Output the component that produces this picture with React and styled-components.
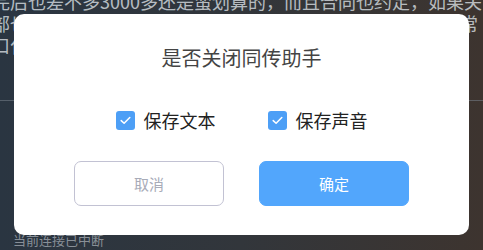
import styled, { createGlobalStyle } from 'styled-components';
import { useState } from 'react';

const GlobalStyle = createGlobalStyle`
  html, body {
    margin: 0;
    padding: 0;
  }
  body {
    font-family: "Noto Sans CJK SC", "Noto Sans", sans-serif;
  }
`;

const backgroundLines = [
  '完后也差不多3000多还是蛮划算的，而且合同也约定，如果关',
  '部也可以正常退款的，之前也有很多同学这样操作过的，非常',
  '口化的表达方式，老师上课的时候也会给大家讲解的很清楚',
];

function CheckItem({ label, checked, onToggle }) {
  return (
    <S.CheckLabel onClick={onToggle}>
      <S.Box $checked={checked}>
        {checked && (
          <svg width="11" height="9" viewBox="0 0 11 9" fill="none">
            <path d="M1.2 4.6 L4.1 7.3 L9.8 1.5" stroke="#fff" strokeWidth="1.5" strokeLinecap="round" strokeLinejoin="round" />
          </svg>
        )}
      </S.Box>
      <S.CheckText>{label}</S.CheckText>
    </S.CheckLabel>
  );
}

function App() {
  const [saveText, setSaveText] = useState(true);
  const [saveVoice, setSaveVoice] = useState(true);

  return (
    <>
      <GlobalStyle />
      <S.Page>
        <S.Backdrop>
          {backgroundLines.map((line) => (
            <S.BgLine key={line}>{line}</S.BgLine>
          ))}
          <S.Divider />
          <S.Spacer />
          <S.BgFooter>当前连接已中断</S.BgFooter>
        </S.Backdrop>

        <S.Dialog>
          <S.Title>是否关闭同传助手</S.Title>
          <S.CheckRow>
            <CheckItem label="保存文本" checked={saveText} onToggle={() => setSaveText(!saveText)} />
            <CheckItem label="保存声音" checked={saveVoice} onToggle={() => setSaveVoice(!saveVoice)} />
          </S.CheckRow>
          <S.ButtonRow>
            <S.Button>取消</S.Button>
            <S.Button $primary>确定</S.Button>
          </S.ButtonRow>
        </S.Dialog>
      </S.Page>
    </>
  );
}

export default App;

const S = {
  Page: styled.div`
    position: relative;
    width: 483px;
    height: 250px;
    overflow: hidden;
    background: linear-gradient(90deg, #2a3541 0%, #32363b 50%, #3d342f 100%);
  `,
  Backdrop: styled.div`
    display: flex;
    flex-direction: column;
    height: calc(100% + 10px);
    margin-top: -10px;
    margin-left: -8px;
  `,
  BgLine: styled.div`
    font-size: 18px;
    line-height: 22px;
    height: 22px;
    white-space: nowrap;
    color: rgba(220, 225, 230, 0.8);
  `,
  Divider: styled.div`
    margin-top: 44px;
    height: 1px;
    background: rgba(120, 130, 140, 0.55);
  `,
  Spacer: styled.div`
    flex: 1;
  `,
  BgFooter: styled.div`
    font-size: 13px;
    line-height: 16px;
    padding: 0 0 2px 21px;
    color: rgba(200, 206, 212, 0.6);
  `,
  Dialog: styled.div`
    position: absolute;
    left: 14px;
    top: 14px;
    width: 455px;
    height: 221px;
    box-sizing: border-box;
    background: #fff;
    border-radius: 10px;
    display: flex;
    flex-direction: column;
    align-items: center;
    padding-top: 32px;
  `,
  Title: styled.div`
    font-size: 20px;
    line-height: 24px;
    color: #444;
  `,
  CheckRow: styled.div`
    display: flex;
    align-items: center;
    gap: 52px;
    margin-top: 40px;
    height: 20px;
  `,
  CheckLabel: styled.label`
    display: flex;
    align-items: center;
    gap: 9px;
    cursor: pointer;
  `,
  Box: styled.span`
    width: 19px;
    height: 19px;
    border-radius: 3px;
    display: flex;
    align-items: center;
    justify-content: center;
    background: ${(props) => (props.$checked ? '#4d9ff6' : '#fff')};
    border: ${(props) => (props.$checked ? 'none' : '1px solid #c0c4cc')};
  `,
  CheckText: styled.span`
    font-size: 18px;
    line-height: 20px;
    color: #222;
  `,
  ButtonRow: styled.div`
    display: flex;
    gap: 35px;
    margin-top: 31px;
  `,
  Button: styled.button`
    width: 150px;
    height: 45px;
    box-sizing: border-box;
    border-radius: 7px;
    font-family: "Noto Sans CJK SC", sans-serif;
    font-size: 15px;
    cursor: pointer;
    border: 1px solid ${(props) => (props.$primary ? '#52a6fc' : '#c2c2d3')};
    background: ${(props) => (props.$primary ? '#52a6fc' : '#fff')};
    color: ${(props) => (props.$primary ? '#fff' : '#a8abb8')};
  `,
};
